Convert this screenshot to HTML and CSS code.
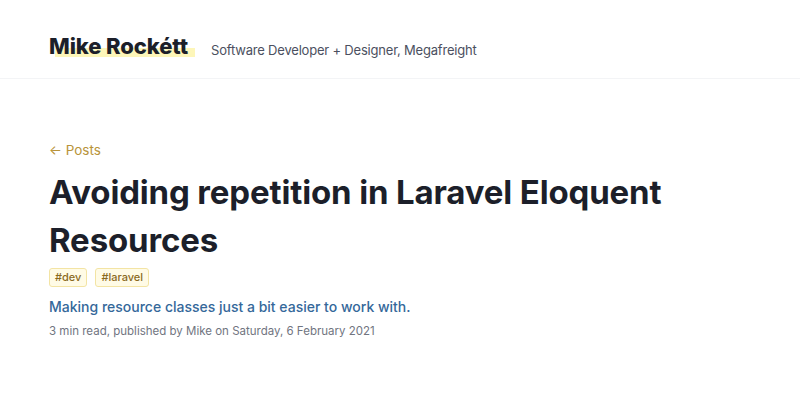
FILE: index.html
```html
<!DOCTYPE html>
<html>
<head>
<meta charset="utf-8">
<link rel="stylesheet" href="styles.css">
</head>
<body>
<header class="site-header">
  <a class="brand" href="#"><span class="brand-text">Mike Rockétt</span></a>
  <span class="tagline">Software Developer + Designer, Megafreight</span>
</header>
<main class="post">
  <a class="back" href="#">← Posts</a>
  <h1 class="title">Avoiding repetition in Laravel Eloquent Resources</h1>
  <div class="tags">
    <span class="tag">#dev</span>
    <span class="tag">#laravel</span>
  </div>
  <p class="lead">Making resource classes just a bit easier to work with.</p>
  <p class="meta">3 min read, published by Mike on Saturday, 6 February 2021</p>
</main>
</body>
</html>
```
FILE: styles.css
```css
* { box-sizing: border-box; }
html, body { margin: 0; padding: 0; background: #fff; }
body { font-family: Inter, "Noto Sans", sans-serif; color: #1f2330; }
a { text-decoration: none; }

.site-header {
  display: flex;
  align-items: baseline;
  gap: 16px;
  padding: 32px 49px 0;
  height: 79px;
  border-bottom: 1px solid #f3f4f6;
}
.brand {
  font-size: 22px;
  line-height: 28px;
  font-weight: 800;
  letter-spacing: -0.1px;
  color: #1c1f2a;
  padding-right: 7px;
  background: linear-gradient(to bottom, transparent 57%, #fdf6b9 57%, #fdf6b9 91%, transparent 91%);
  background-position: 6px 0;
  background-repeat: no-repeat;
}
.tagline {
  position: relative;
  top: 1px;
  font-size: 13px;
  letter-spacing: -0.2px;
  color: #4b5060;
}

.post {
  padding: 61px 49px 0;
}
.back {
  display: block;
  font-size: 13.5px;
  color: #b8933a;
  line-height: 20px;
}
.title {
  margin: 8px 0 0;
  font-size: 33px;
  line-height: 48px;
  font-weight: 700;
  letter-spacing: -0.15px;
  color: #1c1f2a;
  max-width: 660px;
}
.tags {
  display: flex;
  gap: 8px;
  margin-top: 4px;
}
.tag {
  font-size: 11px;
  font-weight: 500;
  color: #8a6a1e;
  background: #fffbe6;
  border: 1px solid #f3e4a4;
  border-radius: 3px;
  padding: 1px 5px;
  line-height: 15px;
}
.lead {
  margin: 10px 0 0;
  font-size: 14px;
  font-weight: 500;
  color: #35689a;
  line-height: 20px;
}
.meta {
  margin: 5px 0 0;
  font-size: 11.5px;
  color: #71757f;
  line-height: 18px;
}
```
